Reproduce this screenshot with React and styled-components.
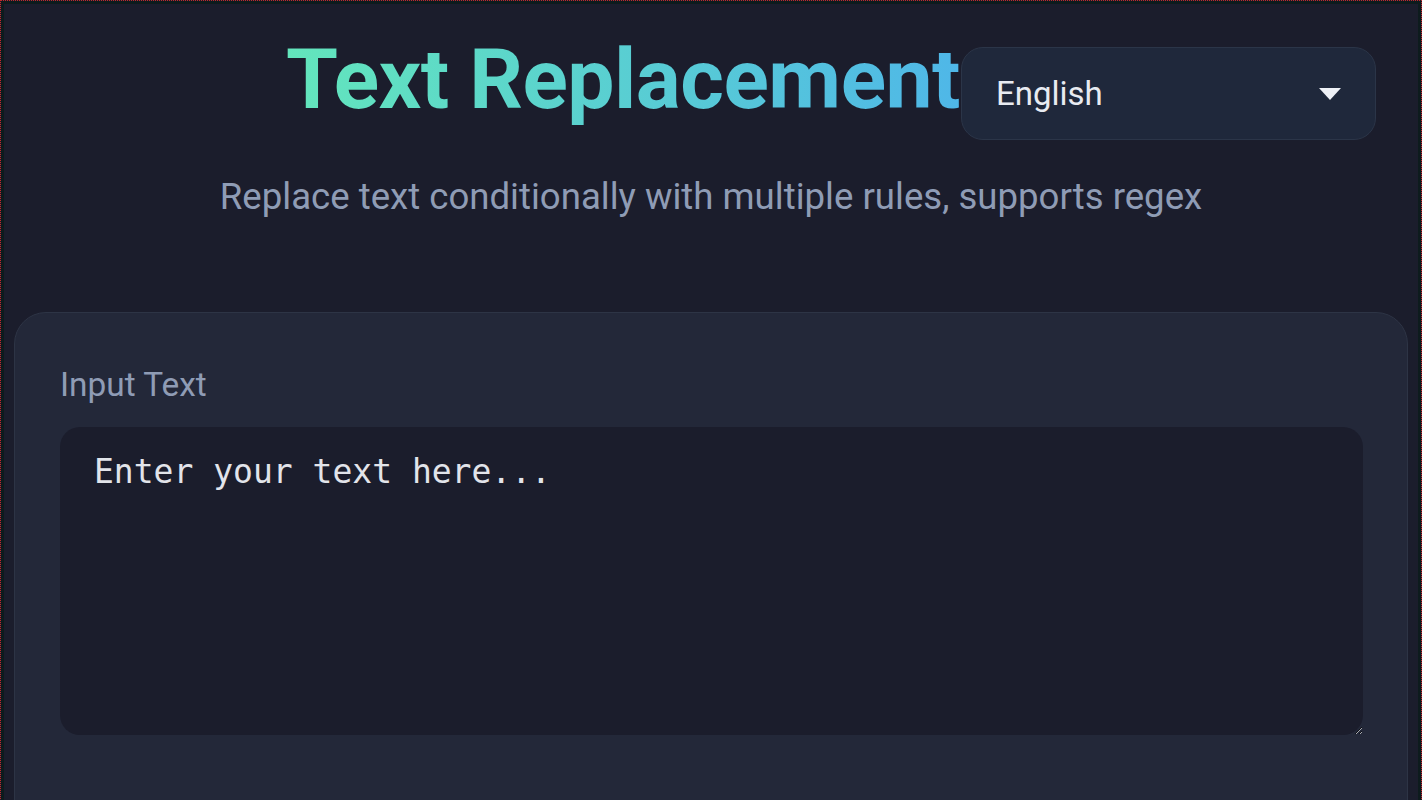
import React, { useState } from "react";
import styled, { createGlobalStyle } from "styled-components";

const Global = createGlobalStyle`
  html, body {
    margin: 0;
    padding: 0;
    background: #1b1d2c;
    overflow: hidden;
  }
  body {
    font-family: Roboto, "Liberation Sans", sans-serif;
    color: #e2e8f0;
  }
  * { box-sizing: border-box; }
`;

const Page = styled.div`
  position: relative;
  min-height: 100vh;
  padding: 29px 13px 0 13px;
  border: 1px dotted #c42a2a;
  box-shadow: inset 0 0 0 3px #0d1b1d;
`;

const Header = styled.header`
  display: flex;
  justify-content: center;
  padding-right: 176px;
`;

const Title = styled.h1`
  margin: 0;
  font-size: 84px;
  line-height: 1.2;
  font-weight: 700;
  letter-spacing: -0.5px;
  background: linear-gradient(90deg, #63e6bc 0%, #4fb7e8 100%);
  -webkit-background-clip: text;
  background-clip: text;
  color: transparent;
`;

const Subtitle = styled.p`
  margin: 44px 0 0;
  text-align: center;
  font-size: 36.6px;
  line-height: 1.2;
  color: #8f9cb5;
`;

const LangSelect = styled.button`
  position: absolute;
  top: 46px;
  right: 45px;
  width: 415px;
  height: 93px;
  display: flex;
  align-items: center;
  justify-content: space-between;
  padding: 0 34px 0 34px;
  border-radius: 22px;
  border: 1px solid #2b3548;
  background: #1f283b;
  color: #e8ebf1;
  font-family: Roboto, "Liberation Sans", sans-serif;
  font-size: 33px;
  cursor: pointer;
`;

const Caret = styled.span`
  width: 0;
  height: 0;
  border-left: 11px solid transparent;
  border-right: 11px solid transparent;
  border-top: 12px solid #eef1f6;
`;

const Card = styled.section`
  margin-top: 93px;
  background: #232839;
  border: 1px solid #2d3445;
  border-radius: 32px;
  padding: 52px 44px 60px 45px;
  min-height: 600px;
`;

const Label = styled.label`
  display: block;
  font-size: 33.4px;
  line-height: 1.2;
  color: #8f9cb5;
  margin-bottom: 22px;
`;

const TextArea = styled.textarea`
  display: block;
  width: 100%;
  height: 308px;
  border: none;
  outline: none;
  border-radius: 20px;
  background: #1b1d2c;
  color: #e6e8ee;
  padding: 22px 34px;
  font-family: "DejaVu Sans Mono", "Liberation Mono", monospace;
  font-size: 33px;
  line-height: 1.4;
  resize: vertical;
  &::placeholder {
    color: #e2e4ea;
    opacity: 1;
  }
`;

export default function App() {
  const [text, setText] = useState("");
  return (
    <>
      <Global />
      <Page>
        <Header>
          <Title>Text Replacement</Title>
        </Header>
        <LangSelect type="button">
          <span>English</span>
          <Caret />
        </LangSelect>
        <Subtitle>Replace text conditionally with multiple rules, supports regex</Subtitle>
        <Card>
          <Label htmlFor="input">Input Text</Label>
          <TextArea
            id="input"
            placeholder="Enter your text here..."
            value={text}
            onChange={(e) => setText(e.target.value)}
          />
        </Card>
      </Page>
    </>
  );
}
